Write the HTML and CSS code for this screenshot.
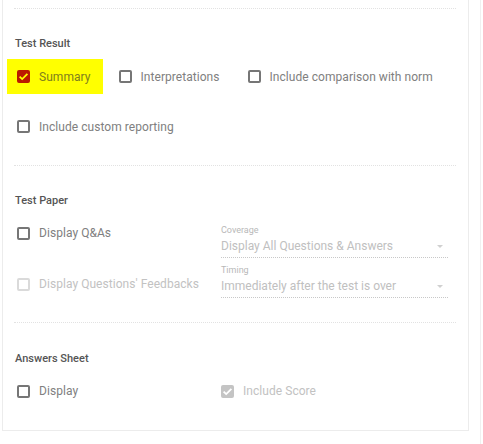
FILE: index.html
```html
<!DOCTYPE html>
<html lang="en">
<head>
    <meta charset="UTF-8">
    <meta name="viewport" content="width=device-width, initial-scale=1.0">
    <title>Report Options</title>
    <link rel="stylesheet" href="styles.css">
</head>
<body>

<div class="page">
<div class="card">

    <hr class="divider">

    <!-- Test Result -->
    <div class="section section-result">
        <h3>Test Result</h3>
        <div class="row">
            <label class="option highlight">
                <span class="box checked">
                    <svg width="13" height="13" viewBox="0 0 13 13"><polyline points="2.6,6.6 5.2,9.1 10.4,3.8" fill="none" stroke="#ffff00" stroke-width="1.8"/></svg>
                </span>
                <span class="text">Summary</span>
            </label>
            <label class="option">
                <span class="box"></span>
                <span class="text">Interpretations</span>
            </label>
            <label class="option">
                <span class="box"></span>
                <span class="text">Include comparison with norm</span>
            </label>
        </div>
        <div class="row">
            <label class="option">
                <span class="box"></span>
                <span class="text">Include custom reporting</span>
            </label>
        </div>
    </div>

    <hr class="divider">

    <!-- Test Paper -->
    <div class="section section-paper">
        <h3>Test Paper</h3>
        <div class="paper-grid">
            <label class="option">
                <span class="box"></span>
                <span class="text">Display Q&amp;As</span>
            </label>
            <div class="field">
                <div class="field-label">Coverage</div>
                <div class="field-value">
                    <span>Display All Questions &amp; Answers</span>
                    <span class="arrow"></span>
                </div>
            </div>
            <label class="option disabled lower">
                <span class="box"></span>
                <span class="text">Display Questions' Feedbacks</span>
            </label>
            <div class="field">
                <div class="field-label">Timing</div>
                <div class="field-value">
                    <span>Immediately after the test is over</span>
                    <span class="arrow"></span>
                </div>
            </div>
        </div>
    </div>

    <hr class="divider">

    <!-- Answers Sheet -->
    <div class="section section-answers">
        <h3>Answers Sheet</h3>
        <div class="paper-grid">
            <label class="option">
                <span class="box"></span>
                <span class="text">Display</span>
            </label>
            <label class="option disabled flush">
                <span class="box checked-grey">
                    <svg width="13" height="13" viewBox="0 0 13 13"><polyline points="2.6,6.6 5.2,9.1 10.4,3.8" fill="none" stroke="#ffffff" stroke-width="1.8"/></svg>
                </span>
                <span class="text">Include Score</span>
            </label>
        </div>
    </div>

</div>
</div>

</body>
</html>
```

FILE: styles.css
```css
body {
    margin: 0;
    font-family: Roboto, "Liberation Sans", Arial, sans-serif;
    background-color: #ffffff;
}
.page {
    width: 480px;
    height: 444px;
    border-right: 1px solid #f0f0f0;
}
.card {
    margin-left: 2px;
    width: 465px;
    border: 1px solid #ececec;
    border-top: none;
    padding-top: 8px;
    padding-bottom: 31px;
}
.divider {
    margin: 0 12px 0 11px;
    border: none;
    border-top: 1px dotted #e2e2e2;
}
.section {
    padding: 28px 12px 0 12px;
}
.section-result {
    padding-bottom: 21px;
}
.section-paper {
    padding-bottom: 24px;
}
.section-answers {
    padding-top: 29px;
}
h3 {
    margin: 0;
    font-size: 11px;
    line-height: 14px;
    font-weight: 500;
    color: #555555;
}
.row {
    display: flex;
    align-items: center;
    height: 35px;
    margin-top: 8px;
}
.row + .row {
    margin-top: 15px;
}
.option {
    display: inline-flex;
    align-items: center;
    flex-shrink: 0;
    white-space: nowrap;
    height: 16px;
    padding-left: 2px;
    margin-right: 26px;
    font-size: 12px;
    letter-spacing: 0.05px;
    color: #808080;
}
.option.flush {
    padding-left: 0;
}
.option.highlight {
    height: 35px;
    padding: 0 12px 0 10px;
    margin-left: -8px;
    margin-right: 14px;
    background-color: #ffff00;
    color: #80801e;
}
.box {
    box-sizing: border-box;
    width: 13px;
    height: 13px;
    border: 2px solid #767676;
    border-radius: 2px;
    margin-right: 9px;
    flex-shrink: 0;
    position: relative;
}
.box svg {
    position: absolute;
    left: -2px;
    top: -2px;
}
.box.checked {
    background-color: #bb1a00;
    border-color: #bb1a00;
}
.box.checked-grey {
    background-color: #c4c4c4;
    border-color: #c4c4c4;
}
.option.disabled {
    color: #c2c2c2;
}
.option.disabled .box {
    border-color: #dadada;
}
.option.disabled .box.checked-grey {
    border-color: #c4c4c4;
}
.paper-grid {
    display: grid;
    grid-template-columns: 206px 227px;
    row-gap: 7px;
    margin-top: 17px;
    align-items: start;
}
.option.lower {
    margin-top: 11px;
}
.field-label {
    font-size: 9px;
    line-height: 11px;
    color: #b8b8b8;
}
.field-value {
    display: flex;
    justify-content: space-between;
    align-items: center;
    margin-top: 2px;
    font-size: 12px;
    line-height: 16px;
    color: #c0c0c0;
    padding-bottom: 3px;
    border-bottom: 1px dotted #c8c8c8;
}
.arrow {
    width: 0;
    height: 0;
    margin-right: 5px;
    border-left: 3.5px solid transparent;
    border-right: 3.5px solid transparent;
    border-top: 3.5px solid #d0d0d0;
}
```
